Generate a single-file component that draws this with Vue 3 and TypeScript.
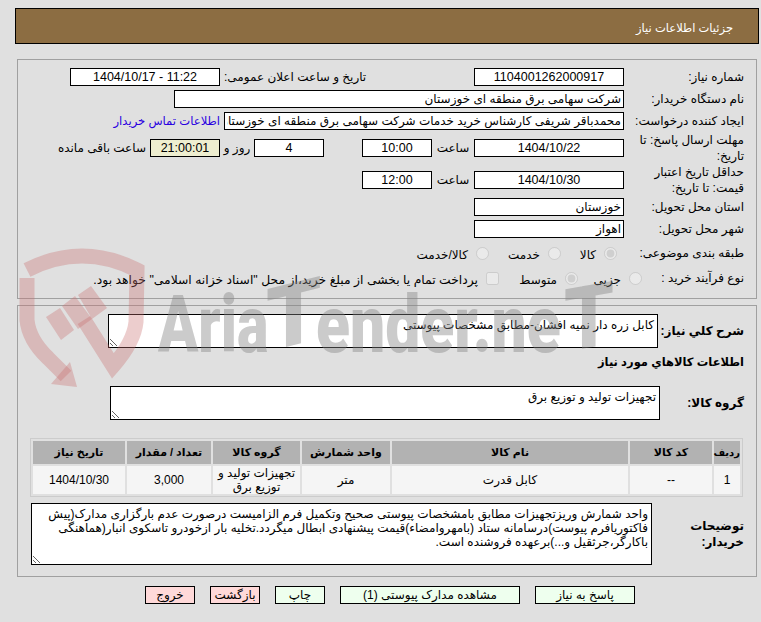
<script setup lang="ts">
const description =
  'واحد شمارش وریزتجهیزات مطابق بامشخصات پیوستی صحیح وتکمیل فرم الزامیست درصورت عدم بارگزاری مدارک(پیش فاکتوریافرم پیوست)درسامانه ستاد (بامهروامضاء)قیمت پیشنهادی ابطال میگردد.تخلیه بار ازخودرو تاسکوی انبار(هماهنگی باکارگر،جرثقیل و...)برعهده فروشنده است.'
const columns = [
  { title: 'ردیف', width: 26 },
  { title: 'کد کالا', width: 82 },
  { title: 'نام کالا', width: 236 },
  { title: 'واحد شمارش', width: 88 },
  { title: 'گروه کالا', width: 87 },
  { title: 'تعداد / مقدار', width: 84 },
  { title: 'تاریخ نیاز', width: 92 },
]
const cells = ['1', '--', 'کابل قدرت', 'متر', 'تجهیزات تولید و توزیع برق', '3,000', '1404/10/30']
const buttons = [
  { label: 'پاسخ به نیاز', kind: 'ok wide' },
  { label: 'مشاهده مدارک پیوستی (1)', kind: 'ok widest' },
  { label: 'چاپ', kind: 'ok' },
  { label: 'بازگشت', kind: 'bad' },
  { label: 'خروج', kind: 'bad' },
]
</script>

<template>
  <div class="page" dir="rtl">
    <header class="title"><span>جزئیات اطلاعات نیاز</span></header>

    <section class="box top">
      <div class="row">
        <label class="lbl">شماره نیاز:</label>
        <input class="fld w150 c" readonly value="1104001262000917" />
        <span class="public-lbl">تاریخ و ساعت اعلان عمومی:</span>
        <input class="fld w150 c" dir="ltr" readonly value="1404/10/17 - 11:22" />
      </div>
      <div class="row">
        <label class="lbl">نام دستگاه خریدار:</label>
        <input class="fld w450" readonly value="شرکت سهامی برق منطقه ای خوزستان" />
      </div>
      <div class="row">
        <label class="lbl">ایجاد کننده درخواست:</label>
        <input class="fld w400" readonly value="محمدباقر شریفی کارشناس خرید خدمات شرکت سهامی برق منطقه ای خوزستان" />
        <a class="contact">اطلاعات تماس خریدار</a>
      </div>
      <div class="row two r4">
        <label class="lbl">مهلت ارسال پاسخ: تا تاریخ:</label>
        <input class="fld w150 c" readonly value="1404/10/22" />
        <span class="hour">ساعت</span>
        <input class="fld w70 c" readonly value="10:00" />
        <input class="fld w70 c days" readonly value="4" />
        <span class="rooz">روز و</span>
        <input class="fld w70 c remain" readonly value="21:00:01" />
        <span class="left">ساعت باقی مانده</span>
      </div>
      <div class="row two r5">
        <label class="lbl">حداقل تاریخ اعتبار قیمت: تا تاریخ:</label>
        <input class="fld w150 c" readonly value="1404/10/30" />
        <span class="hour">ساعت</span>
        <input class="fld w70 c" readonly value="12:00" />
      </div>
      <div class="row r6">
        <label class="lbl">استان محل تحویل:</label>
        <input class="fld w150" readonly value="خوزستان" />
      </div>
      <div class="row">
        <label class="lbl">شهر محل تحویل:</label>
        <input class="fld w150" readonly value="اهواز" />
      </div>
      <div class="row opts r8">
        <label class="lbl">طبقه بندی موضوعی:</label>
        <span class="opt o1"><input type="radio" disabled checked name="a" /><span>کالا</span></span>
        <span class="opt o2"><input type="radio" disabled name="a" /><span>خدمت</span></span>
        <span class="opt o3"><input type="radio" disabled name="a" /><span>کالا/خدمت</span></span>
      </div>
      <div class="row opts r9">
        <label class="lbl">نوع فرآیند خرید :</label>
        <span class="opt p1"><input type="radio" disabled name="b" /><span>جزیی</span></span>
        <span class="opt p2"><input type="radio" disabled checked name="b" /><span>متوسط</span></span>
        <span class="opt p3"><input type="checkbox" disabled /><span>پرداخت تمام یا بخشی از مبلغ خرید،از محل "اسناد خزانه اسلامی" خواهد بود.</span></span>
      </div>
    </section>

    <section class="box bottom">
      <div class="row summary">
        <label class="lbl strong">شرح کلي نیاز:</label>
        <textarea class="area s550" readonly>کابل زره دار نمیه افشان-مطابق مشخصات پیوستی</textarea>
      </div>
      <h3 class="heading">اطلاعات کالاهاي مورد نیاز</h3>
      <div class="row group">
        <label class="lbl strong">گروه کالا:</label>
        <textarea class="area g550" readonly>تجهیزات تولید و توزیع برق</textarea>
      </div>
      <table class="goods">
        <thead>
          <tr><th v-for="c in columns" :key="c.title" :style="{ width: c.width + 'px' }">{{ c.title }}</th></tr>
        </thead>
        <tbody>
          <tr><td v-for="(c, i) in cells" :key="i">{{ c }}</td></tr>
        </tbody>
      </table>
      <div class="row notes">
        <label class="lbl strong">توضیحات خریدار:</label>
        <textarea class="area d621" readonly :value="description"></textarea>
      </div>
    </section>

    <footer class="actions">
      <button v-for="b in buttons" :key="b.label" :class="['btn', b.kind]">{{ b.label }}</button>
    </footer>

    <svg class="mark" viewBox="0 0 761 622" aria-hidden="true">
      <g class="shield">
        <path class="stroke" d="M27 270 Q82 242 137 270 L136 322 Q134 342 113 366 L84 320" />
        <path class="stroke" d="M27 278 L27 320 Q29 340 48 358 L66 376" />
        <polygon points="51,384 70,362 77,387" />
        <polygon points="46,317 60,308 74,330 61,340" />
        <polygon points="62,306 75,296 92,319 78,329" />
        <polygon points="78,295 91,286 107,308 92,319" />
      </g>
      <g class="word">
        <text transform="translate(158 352) scale(0.74 1)">Aria</text>
        <text class="big" transform="translate(266 352) skewY(-14)">T</text>
        <text transform="translate(316 352) scale(0.78 1)">ender.ne</text>
        <text class="big" transform="translate(564 352) skewY(-10) scale(0.9 1)">T</text>
      </g>
    </svg>
  </div>
</template>

<style>
html, body { margin: 0; background: #e0e0e0; }
</style>

<style scoped>
.page {
  position: relative;
  width: 761px;
  height: 622px;
  overflow: hidden;
  background: #e0e0e0;
  color: #000;
  font: 12px "Liberation Sans", "DejaVu Sans", sans-serif;
  box-sizing: border-box;
  padding: 8px 2px 0 4px;
}
.title {
  box-sizing: border-box;
  height: 36px;
  margin: 0 0 0 11px;
  background: #8c6d42;
  border: 1px solid #000;
  color: #fff;
  display: flex;
  align-items: center;
  padding: 3px 25px 0 0;
  font-size: 11.5px;
}
.box {
  box-sizing: border-box;
  border: 1px solid #a0a0a0;
  margin-left: 13px;
  margin-right: 2px;
}
.box.top { margin-top: 15px; height: 240px; padding-top: 8px; }
.box.bottom { margin-top: 6px; height: 272px; padding-top: 8px; }
.row { display: flex; align-items: center; height: 18px; margin-bottom: 4px; }
.lbl {
  box-sizing: border-box;
  width: 132px;
  flex: none;
  padding-right: 12px;
  line-height: 16px;
}
.r4 { margin-top: 9px; margin-bottom: 14px; }
.r5 { margin-bottom: 9px; }
.fld {
  box-sizing: border-box;
  height: 18px;
  border: 1px solid #000;
  background: #fff;
  padding: 0 2px;
  font: inherit;
  color: #000;
  outline: none;
  flex: none;
  border-radius: 0;
}
.c { text-align: center; font-size: 12.5px; }
.w70 { width: 70px; }
.w150 { width: 150px; }
.w400 { width: 400px; }
.w450 { width: 450px; }
.public-lbl { width: 254px; flex: none; text-align: left; padding-left: 4px; box-sizing: border-box; }
.contact { color: #2a00e0; margin-right: 4px; white-space: nowrap; font-size: 11.6px; }
.hour { width: 42px; text-align: center; flex: none; }
.days { margin-right: 38px; }
.rooz { width: 34px; text-align: center; flex: none; }
.remain { background: #eeeed0; }
.left { margin-right: 4px; white-space: nowrap; }
.r8 { margin-top: 6px; margin-bottom: 7px; }
.opt { display: flex; align-items: center; flex: none; white-space: nowrap; }
.opt input { margin: 0; flex: none; width: 13px; height: 13px; opacity: 0.75; }
.opt span { margin-right: 8px; padding-top: 4px; }
.o1 { margin-right: 7px; width: 56px; }
.o2 { width: 72px; }
.p1 { margin-right: -18px; width: 64px; }
.p2 { width: 79px; }
.p3 span { font-size: 12.35px; }
.strong { font-weight: 700; font-size: 12px; }
.area {
  display: block;
  box-sizing: border-box;
  border: 1px solid #000;
  background: #fff;
  font: inherit;
  color: #000;
  padding: 3px;
  flex: none;
  border-radius: 0;
  outline: none;
  line-height: 14px;
}
.summary { height: 34px; margin-bottom: 0; }
.s550 { width: 550px; height: 34px; margin-right: -34px; }
.heading { margin: 4px 12px 0 0; font-size: 11.5px; line-height: 20px; height: 20px; }
.group { height: 34px; margin-top: 14px; margin-bottom: 0; }
.g550 { width: 550px; height: 34px; margin-right: -36px; }
.goods {
  box-sizing: border-box;
  width: 712px;
  margin: 18px 13px 0 0;
  table-layout: fixed;
  border-collapse: separate;
  border-spacing: 2px;
  border: 1px solid #ccc;
  background: #e0e0e0;
}
.goods th { background: #b2b2b2; height: 23px; padding: 0; font-size: 11px; }
.goods th:first-child { font-size: 10px; }
.goods td { background: #f5f5f5; height: 28px; padding: 0 4px; text-align: center; line-height: 14px; }
.notes { height: 62px; margin-top: 6px; }
.notes .lbl { width: 104px; }
.d621 { width: 621px; height: 62px; }
.actions { display: flex; gap: 15px; margin: 9px 124px 0 0; }
.btn {
  box-sizing: border-box;
  width: 50px;
  height: 18px;
  border: 1px solid #000;
  padding: 0;
  font: inherit;
  color: #000;
}
.wide { width: 100px; }
.widest { width: 180px; }
.ok { background: #eeffee; }
.bad { background: #ffd9d9; }
.mark { position: absolute; left: 0; top: 0; width: 761px; height: 622px; pointer-events: none; direction: ltr; }
.shield polygon { fill: rgba(200, 112, 112, 0.35); }
.stroke { fill: none; stroke: rgba(200, 112, 112, 0.35); stroke-width: 15; }
.word text { font: 900 80px "Roboto", "Liberation Sans", sans-serif; fill: rgba(130, 130, 130, 0.42); }
.word .big { font-size: 88px; }
</style>
